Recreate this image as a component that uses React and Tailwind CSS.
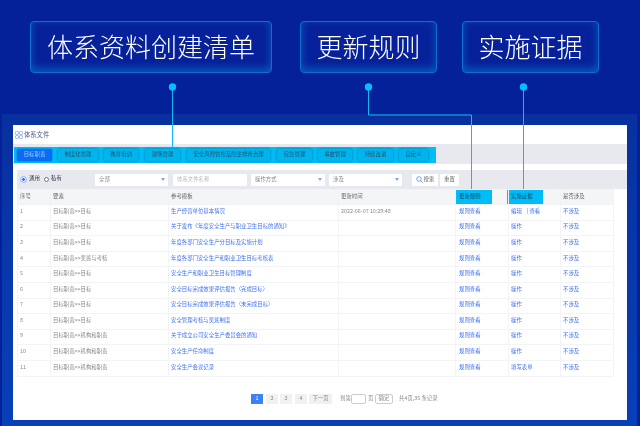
const tabs = [
    ['目标职责', 'w-[35px] ml-[3px]'],
    ['制度化管理', 'w-[40px] ml-[6px]'],
    ['教育培训', 'w-[34px] ml-[6px]'],
    ['现场管理', 'w-[35px] ml-[7px]'],
    ['安全风险管控及隐患排查治理', 'w-[83px] ml-[7px]'],
    ['应急管理', 'w-[35px] ml-[7px]'],
    ['事故管理', 'w-[34px] ml-[6px]'],
    ['持续改进', 'w-[35px] ml-[6px]'],
    ['自定义', 'w-[29px] ml-[6px]'],
];

const rows = [
    ['目标职责>>目标', '生产经营单位基本情况', '2022-06-07 10:29:48'],
    ['目标职责>>目标', '关于发布《年度安全生产与职业卫生目标的通知》'],
    ['目标职责>>目标', '年度各部门安全生产分目标及实施计划'],
    ['目标职责>>奖惩与考核', '年度各部门安全生产和职业卫生目标考核表'],
    ['目标职责>>目标', '安全生产和职业卫生目标管理制度'],
    ['目标职责>>目标', '安全目标完成效果评估报告（完成目标）'],
    ['目标职责>>目标', '安全目标完成效果评估报告（未完成目标）'],
    ['目标职责>>目标', '安全管理考核与奖惩制度'],
    ['目标职责>>机构和职责', '关于成立公司安全生产委员会的通知'],
    ['目标职责>>机构和职责', '安全生产任命制度'],
    ['目标职责>>机构和职责', '安全生产会议记录'],
];

const Heading = ({ children, className }) => (
    <div className={`h-[52px] pb-[3px] flex items-center justify-center rounded-[4px] border border-[#0a70d4] bg-[#06219a] shadow-[inset_0_-3px_8px_#0a5cc4] text-[26px] leading-none font-light text-white ${className}`}>
        <span className="blur-[0.3px]">{children}</span>
    </div>
);

const Caret = () => (
    <svg width="4" height="3" viewBox="0 0 4 3" className="absolute right-[3px] top-[4px]">
        <path d="M0 0h4L2 3z" fill="#8ea4d8" />
    </svg>
);

const Select = ({ children, className }) => (
    <div className={`relative h-[12px] bg-white rounded-[1px] pl-[4px] leading-[10px] text-[#888] ${className}`}>
        {children}
        <Caret />
    </div>
);

const App = () => {
    return (
        <div className="relative w-[640px] h-[426px] overflow-hidden bg-[#05219a] font-['Noto_Sans_CJK_SC','Noto_Sans',sans-serif]">
            <div className="flex pt-[21px] pl-[30px]">
                <Heading className="w-[242px]">体系资料创建清单</Heading>
                <Heading className="w-[137px] ml-[28px]">更新规则</Heading>
                <Heading className="w-[137px] ml-[25px]">实施证据</Heading>
            </div>

            <div className="mt-[41px] ml-[2px] w-[635px] h-[312px] pl-[11px] pt-[11px] bg-gradient-to-b from-[#08309f] to-[#0840b8]">
                <div className="w-[614px] h-[295px] bg-white text-[5.4px] text-[#777] blur-[0.35px]">
                    <div className="h-[19px] flex items-center pl-[2px]">
                        <svg width="8" height="8" viewBox="0 0 8 8" fill="none" stroke="#7fa6ea" strokeWidth="0.8">
                            <rect x="0.5" y="0.5" width="3" height="3" rx="0.8" />
                            <rect x="4.5" y="0.5" width="3" height="3" rx="0.8" />
                            <rect x="0.5" y="4.5" width="3" height="3" rx="0.8" />
                            <rect x="4.5" y="4.5" width="3" height="3" rx="0.8" />
                        </svg>
                        <span className="ml-[1px] text-[6.3px] text-[#4a5a86]">体系文件</span>
                    </div>

                    <div className="h-[20px] bg-[#e7e9ef] pl-[1px] pt-[3px]">
                        <div className="w-[422px] h-[16px] bg-[#00bdf8] flex items-center">
                            {tabs.map(([name, size], i) => (
                                <div
                                    key={name}
                                    className={`h-[12px] pb-[1px] rounded-[1.5px] flex items-center justify-center ${size} ${i === 0 ? 'bg-[#0a6cf5] text-[#9fd0ff] shadow-[0_0_2px_#0a50c0]' : 'bg-[#00b4ee] text-[#1f5068] shadow-[0_0_3px_#04759f]'}`}
                                >
                                    {name}
                                </div>
                            ))}
                        </div>
                    </div>

                    <div className="mt-[6px] ml-[4px] h-[19px] bg-[#e7e9ef] flex items-center">
                        <span className="ml-[4px] w-[5px] h-[5px] rounded-full border border-white bg-[#2f6fe8] outline outline-[0.5px] outline-[#9db6ee]"></span>
                        <span className="ml-[3px] w-[12px] pb-[2px] text-[#334]">通用</span>
                        <span className="ml-[3px] w-[5px] h-[5px] rounded-full border-[0.5px] border-[#777] bg-white"></span>
                        <span className="ml-[2px] w-[12px] pb-[2px] text-[#334]">私有</span>
                        <Select className="ml-[32px] w-[73px]">全部</Select>
                        <div className="ml-[5px] w-[74px] h-[12px] bg-white rounded-[1px] pl-[4px] leading-[10px] text-[#bbb]">体系文件名称</div>
                        <Select className="ml-[4px] w-[74px]">操作方式</Select>
                        <Select className="ml-[4px] w-[73px]">涉及</Select>
                        <div className="ml-[10px] w-[26px] h-[12px] pb-[1px] bg-white rounded-[1px] flex items-center justify-center text-[#666]">
                            <svg width="7" height="7" viewBox="0 0 7 7" fill="none" stroke="#3f7fe8" strokeWidth="0.7" className="mr-[1px]">
                                <circle cx="3" cy="3" r="2.3" />
                                <path d="M4.7 4.7L6.6 6.6" />
                            </svg>
                            搜索
                        </div>
                        <div className="ml-[2px] w-[19px] h-[12px] pb-[1px] bg-white rounded-[1px] flex items-center justify-center text-[#666]">重置</div>
                    </div>

                    <table className="ml-[4px] w-[596px] table-fixed border-collapse">
                        <colgroup>
                            <col className="w-[33px]" />
                            <col className="w-[118px]" />
                            <col className="w-[170px]" />
                            <col className="w-[117px]" />
                            <col className="w-[53px]" />
                            <col className="w-[52px]" />
                            <col className="w-[53px]" />
                        </colgroup>
                        <thead>
                            <tr className="h-[14px] bg-[#f4f5f7] text-left text-[#666]">
                                <th className="font-normal pl-[2px] pb-[1px] border border-[#f1f2f5]">序号</th>
                                <th className="font-normal pl-[2px] pb-[1px] border border-[#f1f2f5]">要素</th>
                                <th className="font-normal pl-[2px] pb-[1px] border border-[#f1f2f5]">参考模板</th>
                                <th className="font-normal pl-[2px] pb-[1px] border border-[#f1f2f5]">更新时间</th>
                                <th className="font-normal p-0 border border-[#f1f2f5]">
                                    <div className="w-[36px] h-[14px] bg-[#00bdf8] pl-[3px] leading-[13px] text-[#14405c]">更新规则</div>
                                </th>
                                <th className="font-normal p-0 border border-[#f1f2f5]">
                                    <div className="w-[36px] h-[14px] -ml-[2px] bg-[#00bdf8] pl-[4px] leading-[13px] text-[#14405c]">实施证据</div>
                                </th>
                                <th className="font-normal pl-[2px] pb-[1px] border border-[#f1f2f5]">是否涉及</th>
                            </tr>
                        </thead>
                        <tbody>
                            {rows.map(([element, template, time], i) => (
                                <tr key={i} className="h-[15.6px]">
                                    <td className="pl-[2px] pb-[3px] border border-[#f3f4f7] text-[#888]">{i + 1}</td>
                                    <td className="pl-[2px] pb-[3px] border border-[#f3f4f7] text-[#888]">{element}</td>
                                    <td className="pl-[2px] pb-[3px] border border-[#f3f4f7] text-[#3f72ee]">{template}</td>
                                    <td className="pl-[2px] pb-[3px] border border-[#f3f4f7] text-[#888]">{time}</td>
                                    <td className="pl-[3px] pb-[3px] border border-[#f3f4f7] text-[#3f72ee]">规则查看</td>
                                    <td className="pl-[2px] pb-[3px] border border-[#f3f4f7] text-[#3f72ee]">
                                        {i === 0 ? (
                                            <span>编辑<span className="ml-[5px] text-[#666]">|</span> 查看</span>
                                        ) : i === 10 ? '填写表单' : '操作'}
                                    </td>
                                    <td className="pl-[2px] pb-[3px] border border-[#f3f4f7] text-[#3f72ee]">不涉及</td>
                                </tr>
                            ))}
                        </tbody>
                    </table>

                    <div className="mt-[17px] ml-[238px] h-[11px] flex items-center whitespace-nowrap text-[#888]">
                        <span className="w-[12px] h-[10px] pb-[1px] bg-[#3b82f6] text-white flex items-center justify-center">1</span>
                        <span className="ml-[3px] w-[12px] h-[10px] pb-[1px] bg-[#f1f1f1] flex items-center justify-center">2</span>
                        <span className="ml-[2px] w-[12px] h-[10px] pb-[1px] bg-[#f1f1f1] flex items-center justify-center">3</span>
                        <span className="ml-[3px] w-[12px] h-[10px] pb-[1px] bg-[#f1f1f1] flex items-center justify-center">4</span>
                        <span className="ml-[2px] w-[23px] h-[10px] pb-[1px] bg-[#f1f1f1] flex items-center justify-center">下一页</span>
                        <span className="ml-[8px] w-[11px] pb-[1px]">到第</span>
                        <span className="w-[15px] h-[10px] border-[0.5px] border-[#ccc] rounded-[2px]"></span>
                        <span className="ml-[2px] w-[6px] pb-[1px]">页</span>
                        <span className="ml-[1px] w-[18px] h-[10px] pb-[1px] border-[0.5px] border-[#ccc] rounded-[2px] flex items-center justify-center">确定</span>
                        <span className="ml-[6px] pb-[1px]">共4页,35 条记录</span>
                    </div>
                </div>
            </div>

            <svg width="640" height="426" className="absolute left-0 top-0 pointer-events-none" fill="none" stroke="#12b8f5" strokeWidth="1">
                <circle cx="172.5" cy="87" r="3.7" fill="#00bfff" stroke="none" />
                <circle cx="368.5" cy="87" r="3.7" fill="#00bfff" stroke="none" />
                <circle cx="523.5" cy="87" r="3.7" fill="#00bfff" stroke="none" />
                <path d="M172.5 87V147" />
                <path d="M368.5 87V115H471.5V189" />
                <path d="M523.5 87V189" />
            </svg>
        </div>
    );
};

export default App;
